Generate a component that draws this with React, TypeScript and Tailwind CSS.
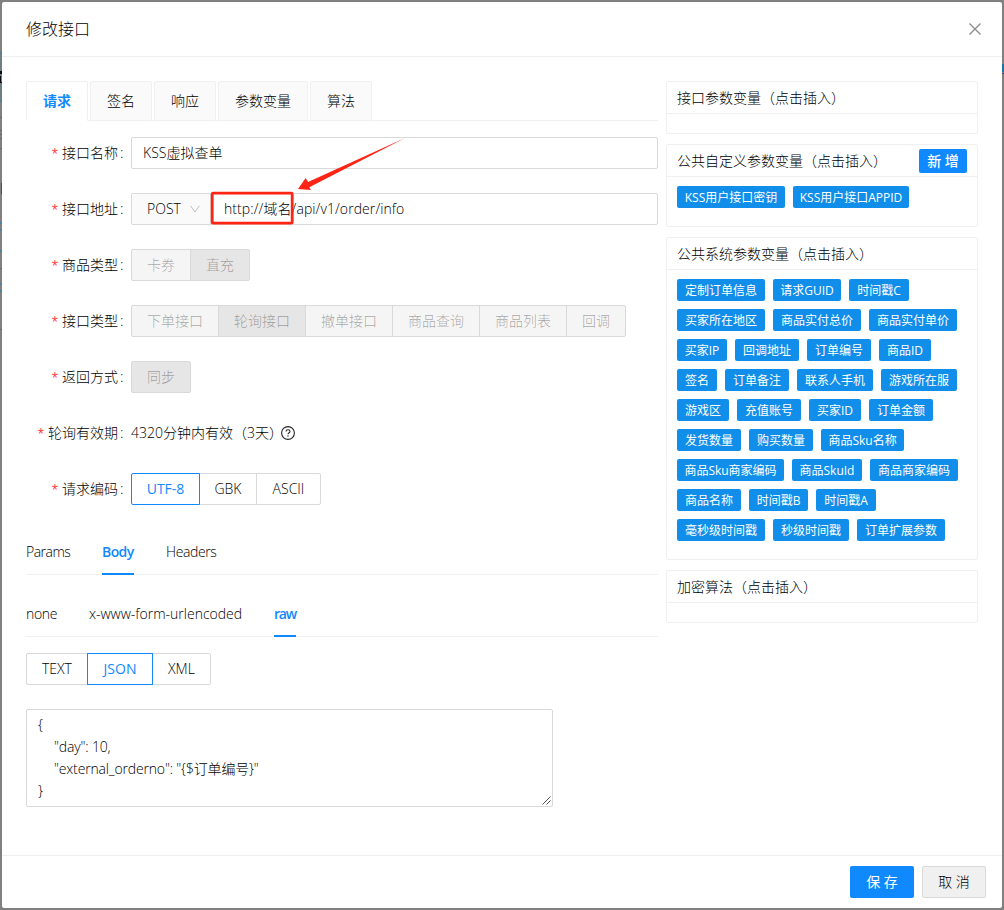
import clsx from "clsx";

const paramTabs = ["请求", "签名", "响应", "参数变量", "算法"];

interface Option {
  label: string;
  width?: string;
  spacing?: string;
}

const systemParams: Option[] = [
  { label: "定制订单信息" },
  { label: "请求GUID", width: "w-[68px]" },
  { label: "时间戳C", width: "w-[60px]" },
  { label: "买家所在地区" },
  { label: "商品实付总价" },
  { label: "商品实付单价" },
  { label: "买家IP", width: "w-[50px]" },
  { label: "回调地址" },
  { label: "订单编号" },
  { label: "商品ID", width: "w-[52px]" },
  { label: "签名" },
  { label: "订单备注" },
  { label: "联系人手机" },
  { label: "游戏所在服" },
  { label: "游戏区" },
  { label: "充值账号" },
  { label: "买家ID", width: "w-[52px]" },
  { label: "订单金额" },
  { label: "发货数量" },
  { label: "购买数量" },
  { label: "商品Sku名称", width: "w-[83px]" },
  { label: "商品Sku商家编码", width: "w-[107px]" },
  { label: "商品SkuId", width: "w-[70px]" },
  { label: "商品商家编码" },
  { label: "商品名称" },
  { label: "时间戳B", width: "w-[59px]" },
  { label: "时间戳A", width: "w-[60px]" },
  { label: "毫秒级时间戳" },
  { label: "秒级时间戳" },
  { label: "订单扩展参数" },
];

const customParams: Option[] = [
  { label: "KSS用户接口密钥", width: "w-[108px]" },
  { label: "KSS用户接口APPID", width: "w-[116px]" },
];

interface RadioGroupProps {
  options: Option[];
  active: string;
  disabled?: boolean;
}

function RadioGroup({ options, active, disabled }: RadioGroupProps) {
  return (
    <div className="flex">
      {options.map(({ label, width }, i) => (
        <button
          key={label}
          disabled={disabled}
          className={clsx(
            "h-8 border text-center whitespace-nowrap",
            width ?? "px-[15px]",
            i > 0 && "-ml-px",
            i === 0 && "rounded-l-xs",
            i === options.length - 1 && "rounded-r-xs",
            disabled && "border-[#d9d9d9] text-black/35",
            disabled && (label === active ? "bg-[#e6e6e6]" : "bg-[#f5f5f5]"),
            !disabled &&
              (label === active
                ? "relative z-10 border-[#1089ff] font-normal text-[#1089ff]"
                : "border-[#d9d9d9]")
          )}
        >
          {label}
        </button>
      ))}
    </div>
  );
}

function FormRow({ label, children }: { label: string; children: React.ReactNode }) {
  return (
    <div className="mb-6 flex h-8 items-center">
      <div className="mr-2 flex w-[97px] shrink-0 items-center justify-end whitespace-nowrap">
        <span className="mr-1 pt-1 font-['Liberation_Sans'] text-base leading-5 font-normal text-[#ff4d4f]">
          *
        </span>
        {label}
        <span className="ml-0.5 w-[3px]">:</span>
      </div>
      {children}
    </div>
  );
}

function LineTabs({ items, active }: { items: Option[]; active: string }) {
  return (
    <div className="flex h-[46px] gap-8 border-b border-[#f0f0f0]">
      {items.map(({ label, width, spacing }) => (
        <div
          key={label}
          className={clsx(
            "h-[46px] pt-3 leading-[22px] whitespace-nowrap",
            width,
            spacing,
            label === active && "border-b-2 border-[#1089ff] font-semibold text-[#1089ff]"
          )}
        >
          {label}
        </div>
      ))}
    </div>
  );
}

interface ParamCardProps {
  title: string;
  params?: Option[];
  extra?: React.ReactNode;
}

function ParamCard({ title, params = [], extra }: ParamCardProps) {
  return (
    <section className="rounded-xs border border-[#f0f0f0]">
      <header className="flex h-8 items-center justify-between border-b border-[#f0f0f0] px-[10px]">
        {title}
        {extra}
      </header>
      <div className={clsx(params.length ? "pt-[9px] pb-[18px]" : "h-[19px]")}>
        <div className="flex flex-wrap gap-2 pr-4 pl-[10px]">
          {params.map(({ label, width }) => (
            <span
              key={label}
              className={clsx(
                "flex h-[22px] items-center justify-center rounded-xs bg-[#108ee9] pt-px text-xs font-normal whitespace-nowrap text-white",
                width ?? "px-2"
              )}
            >
              {label}
            </span>
          ))}
        </div>
      </div>
    </section>
  );
}

function CloseIcon() {
  return (
    <svg width="12" height="12" viewBox="0 0 12 12" stroke="#8c8c8c" strokeWidth="1.4" fill="none">
      <path d="M0.5 0.5 11.5 11.5M11.5 0.5 0.5 11.5" />
    </svg>
  );
}

function QuestionIcon() {
  return (
    <svg width="14" height="14" viewBox="0 0 14 14" stroke="#262626" fill="none">
      <circle cx="7" cy="7" r="6.4" strokeWidth="1.1" />
      <path d="M5 5.5C5 4.3 5.9 3.7 7 3.7S9 4.4 9 5.4C9 6.7 7 6.8 7 8.3" strokeWidth="1.1" />
      <circle cx="7" cy="10" r="0.7" fill="#262626" stroke="none" />
    </svg>
  );
}

// slivers of the page that stay visible beside the modal
function Backdrop() {
  return (
    <>
      <svg className="absolute top-0 left-0" width="2" height="340" viewBox="0 0 2 340">
        <path fill="#6d7f84" d="M0 52h2v50H0z" />
        <path fill="#3f7fa8" d="M0 52h2v1H0zM0 101h2v1H0zM0 222h1v2H0zM0 229h1v2H0zM0 250h1v2H0zM0 283h1v2H0zM0 290h1v2H0z" />
        <path fill="#0a0a14" d="M0 71h2v3H0zM0 76h1v7H0zM1 82h1v1H1z" />
        <path fill="#6b4a25" d="M1 183h1v11H1z" />
        <path fill="#6a6a6a" d="M0 117h2v1H0zM0 130h2v1H0zM0 134h2v1H0zM0 138h2v1H0zM0 148h2v1H0zM0 268h2v1H0zM0 329h2v1H0z" />
      </svg>
      <svg className="absolute top-0 right-0" width="2" height="80" viewBox="0 0 2 80">
        <path fill="#1f6fa0" d="M0 64h2v8H0z" />
        <path fill="#3d3d8c" d="M0 73h2v1H0z" />
      </svg>
    </>
  );
}

export default function App() {
  return (
    <div className="relative h-[910px] w-[1004px] overflow-hidden bg-[#808080] p-0.5 font-['Open_Sans','Noto_Sans_CJK_SC',sans-serif] text-sm font-light text-black">
      <Backdrop />
      <div className="flex h-[906px] flex-col rounded-xs bg-white">
        <header className="flex h-[55px] shrink-0 items-center justify-between border-b border-[#f0f0f0] pr-[21px] pl-6">
          <h1 className="text-base">修改接口</h1>
          <CloseIcon />
        </header>

        <main className="flex grow gap-2 px-6 pt-6">
          <div className="w-[632px]">
            <div className="mb-4 flex h-10 gap-0.5 border-b border-[#f0f0f0]">
              {paramTabs.map((tab, i) => (
                <div
                  key={tab}
                  className={clsx(
                    "h-10 rounded-t-xs border px-4 leading-[38px]",
                    i === 0
                      ? "border-[#f0f0f0] border-b-white bg-white font-semibold text-[#1089ff]"
                      : "border-[#f0f0f0] bg-[#fafafa]"
                  )}
                >
                  {tab}
                </div>
              ))}
            </div>

            <FormRow label="接口名称">
              <div className="h-8 w-[527px] rounded-xs border border-[#d9d9d9] px-[11px] leading-[30px]">
                KSS虚拟查单
              </div>
            </FormRow>

            <FormRow label="接口地址">
              <div className="relative flex h-8 w-[527px] rounded-xs border border-[#d9d9d9] leading-[30px]">
                <div className="flex w-[79px] items-center justify-between border-r border-[#d9d9d9] bg-[#fafafa] pr-2.5 pl-[15px]">
                  POST
                  <svg width="10" height="8" viewBox="0 0 10 8" stroke="#bfbfbf" fill="none">
                    <path d="M0.5 0.8 5 7 9.5 0.8" />
                  </svg>
                </div>
                <div className="pl-[13px] tracking-[0.08px]">http://域名/api/v1/order/info</div>
                {/* callout on the domain part */}
                <svg
                  className="absolute -top-[62px] left-[68px]"
                  width="220"
                  height="100"
                  viewBox="200 132 220 100"
                  fill="none"
                >
                  <rect x="212.2" y="193.2" width="80" height="30" rx="1" stroke="#ff2414" strokeWidth="2.8" />
                  <path
                    d="M405 138 308 182 305.7 178 298 189 311 190 309.3 187.3Z"
                    fill="#ff2414"
                  />
                </svg>
              </div>
            </FormRow>

            <FormRow label="商品类型">
              <RadioGroup disabled active="直充" options={[{ label: "卡券" }, { label: "直充" }]} />
            </FormRow>

            <FormRow label="接口类型">
              <RadioGroup
                disabled
                active="轮询接口"
                options={[
                  { label: "下单接口" },
                  { label: "轮询接口" },
                  { label: "撤单接口" },
                  { label: "商品查询" },
                  { label: "商品列表" },
                  { label: "回调" },
                ]}
              />
            </FormRow>

            <FormRow label="返回方式">
              <RadioGroup disabled active="同步" options={[{ label: "同步" }]} />
            </FormRow>

            <FormRow label="轮询有效期">
              <span className="mr-2 flex w-[142px] whitespace-nowrap">4320分钟内有效（3天）</span>
              <QuestionIcon />
            </FormRow>

            <FormRow label="请求编码">
              <RadioGroup
                active="UTF-8"
                options={[
                  { label: "UTF-8", width: "w-[69px]" },
                  { label: "GBK", width: "w-[58px]" },
                  { label: "ASCII", width: "w-[65px]" },
                ]}
              />
            </FormRow>

            <LineTabs
              active="Body"
              items={[
                { label: "Params", width: "w-11", spacing: "tracking-[-0.5px]" },
                { label: "Body", width: "w-8", spacing: "tracking-[-0.6px]" },
                { label: "Headers", spacing: "tracking-[-0.4px]" },
              ]}
            />
            <div className="h-4" />
            <LineTabs
              active="raw"
              items={[
                { label: "none", width: "w-[31px]", spacing: "tracking-[-0.3px]" },
                { label: "x-www-form-urlencoded", width: "w-[153px]" },
                { label: "raw", width: "w-[22px]", spacing: "tracking-[-1.2px]" },
              ]}
            />

            <div className="mt-4">
              <RadioGroup
                active="JSON"
                options={[
                  { label: "TEXT", width: "w-[62px]" },
                  { label: "JSON", width: "w-[66px]" },
                  { label: "XML", width: "w-[59px]" },
                ]}
              />
            </div>

            <div className="relative mt-6 h-[98px] w-[527px] rounded-xs border border-[#d9d9d9] px-[11px] py-1 leading-[22px] tracking-[-0.16px] whitespace-pre">
              <div>{"{"}</div>
              <div className="pl-4">"day": 10,</div>
              <div className="pl-4">{'"external_orderno": "{$订单编号}"'}</div>
              <div>{"}"}</div>
              <svg className="absolute right-px bottom-px" width="9" height="9" viewBox="0 0 9 9" stroke="#555">
                <path d="M0.5 8.5 8.5 0.5M4.5 8.5 8.5 4.5" />
              </svg>
            </div>
          </div>

          <aside className="flex w-[312px] flex-col gap-[10px]">
            <ParamCard title="接口参数变量（点击插入）" />
            <ParamCard
              title="公共自定义参数变量（点击插入）"
              params={customParams}
              extra={
                <button className="h-6 w-12 rounded-xs bg-[#1089ff] font-medium text-white">新 增</button>
              }
            />
            <ParamCard title="公共系统参数变量（点击插入）" params={systemParams} />
            <ParamCard title="加密算法（点击插入）" />
          </aside>
        </main>

        <footer className="flex h-[53px] shrink-0 justify-end gap-2 border-t border-[#f0f0f0] pt-[10px] pr-4">
          <button className="h-8 w-16 rounded-xs bg-[#1089ff] font-normal text-white">保 存</button>
          <button className="h-8 w-16 rounded-xs border border-[#d9d9d9] bg-[#f0f0f0]">取 消</button>
        </footer>
      </div>
    </div>
  );
}
